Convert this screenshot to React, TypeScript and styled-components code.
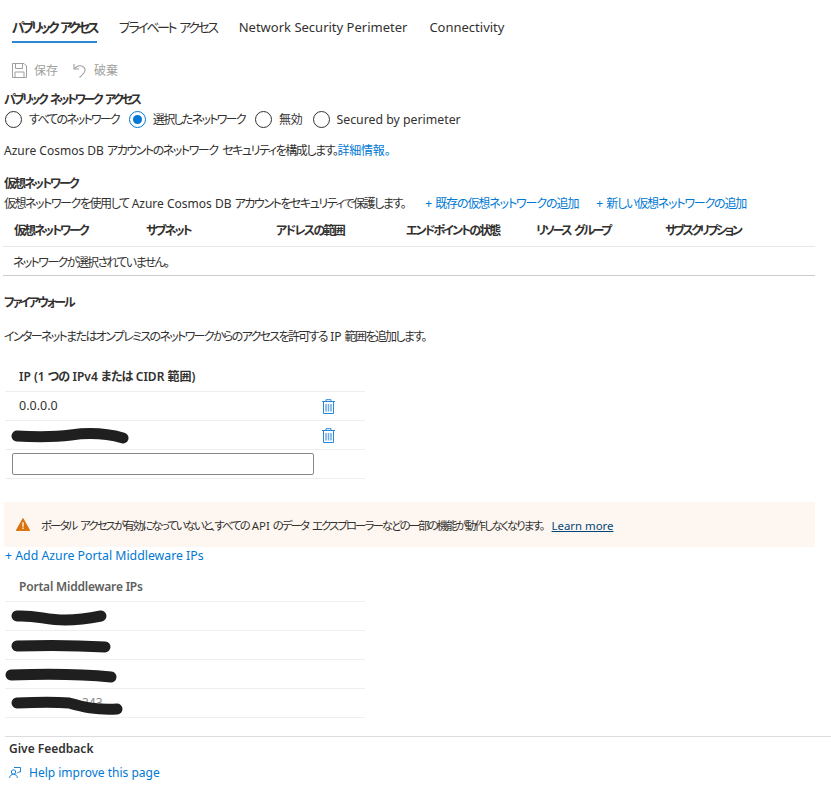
import React from 'react';
import styled, { createGlobalStyle } from 'styled-components';

const GlobalStyle = createGlobalStyle`
  html, body {
    margin: 0;
    padding: 0;
    background: #fff;
  }
  body {
    font-family: "Noto Sans", "Noto Sans CJK JP", sans-serif;
    font-size: 12px;
    font-feature-settings: "palt";
    color: #323130;
  }
`;

const Page = styled.div`
  width: 831px;
  height: 795px;
  overflow: hidden;
`;

// Japanese runs in the original font are much tighter than Noto CJK
const Ja = styled.span<{ $t: number }>`
  letter-spacing: ${({ $t }) => $t}px;
  word-spacing: 3px;
`;

const Tabs = styled.div`
  display: flex;
  gap: 22px;
  padding: 16px 0 0 12px;
`;

const Tab = styled.div<{ $active?: boolean }>`
  height: 25px;
  line-height: 22px;
  font-size: 13px;
  white-space: nowrap;
  font-weight: ${({ $active }) => ($active ? 600 : 400)};
  border-bottom: 2px solid ${({ $active }) => ($active ? '#2b88d8' : 'transparent')};
`;

const Toolbar = styled.div`
  display: flex;
  align-items: center;
  height: 24px;
  margin-top: 15px;
  padding-left: 12px;
  color: #a19f9d;
`;

const ToolButton = styled.div`
  display: flex;
  align-items: center;
  gap: 7px;
  margin-right: 15px;
`;

const Section = styled.div`
  padding: 10px 0 0 4px;
`;

const Label = styled.div`
  font-size: 12px;
  font-weight: 600;
  line-height: 16px;
`;

const RadioRow = styled.div`
  display: flex;
  align-items: center;
  gap: 10px;
  height: 20px;
  margin-top: 1px;
  padding-left: 1px;
`;

const RadioOption = styled.div`
  display: flex;
  align-items: center;
  gap: 7px;
  white-space: nowrap;
`;

const RadioCircle = styled.span<{ $checked?: boolean }>`
  box-sizing: border-box;
  display: flex;
  align-items: center;
  justify-content: center;
  width: 17px;
  height: 17px;
  border-radius: 50%;
  border: 1px solid ${({ $checked }) => ($checked ? '#0078d4' : '#323130')};
  &::after {
    content: '';
    display: ${({ $checked }) => ($checked ? 'block' : 'none')};
    width: 9px;
    height: 9px;
    border-radius: 50%;
    background: #0078d4;
  }
`;

const PerimeterLabel = styled.span`
  font-size: 12.300px;
`;

const Text = styled.div`
  line-height: 16px;
  white-space: nowrap;
`;

const Intro = styled(Text)`
  margin-top: 14px;
`;

const Link = styled.a`
  color: #0078d4;
  text-decoration: none;
`;

const VnetHead = styled(Label)`
  margin-top: 17px;
`;

const VnetDesc = styled.div`
  display: flex;
  height: 20px;
  margin-top: 1px;
  align-items: center;
  white-space: pre;
`;

const AddLink = styled(Link)<{ $left: number }>`
  margin-left: ${({ $left }) => $left}px;
`;

const VnetTable = styled.div`
  width: 812px;
  margin: -1px 0 0 -1px;
  border-bottom: 1px solid #ccc;
`;

const VnetHeader = styled.div`
  display: grid;
  grid-template-columns: 132px 130px 130px 130px 129px 1fr;
  align-items: center;
  height: 33px;
  padding: 1px 0 0 11px;
  box-sizing: content-box;
  border-bottom: 1px solid #e8e8e8;
  font-size: 12px;
  font-weight: 600;
`;

const VnetEmpty = styled.div`
  height: 28px;
  line-height: 31px;
  padding-left: 10px;
`;

const FirewallHead = styled(Label)`
  margin-top: 19px;
`;

const FirewallDesc = styled(Text)`
  margin-top: 18px;
`;

const IpTable = styled.div`
  width: 360px;
  margin: 17px 0 0 1px;
`;

const IpHeader = styled.div`
  height: 30px;
  line-height: 30px;
  padding-left: 14px;
  font-weight: 600;
  border-bottom: 1px solid #eee;
  box-sizing: border-box;
`;

const PortalHeader = styled(IpHeader)`
  color: #605e5c;
  letter-spacing: -0.2px;
`;

const IpRow = styled.div`
  position: relative;
  box-sizing: border-box;
  display: flex;
  align-items: center;
  justify-content: space-between;
  height: 29px;
  padding: 0 30px 0 14px;
  border-bottom: 1px solid #eee;
`;

const IpText = styled.span`
  font-size: 12.500px;
  margin-top: -2px;
`;

const TrashButton = styled.span`
  display: flex;
  margin-left: auto;
  color: #2b88d8;
`;

const IpInput = styled.input`
  box-sizing: border-box;
  width: 302px;
  height: 22px;
  margin-left: -7px;
  border: 1px solid #8a8886;
  border-radius: 2px;
  background: #fff;
`;

const Scribble = styled.svg<{ $left: number }>`
  position: absolute;
  top: 0;
  left: ${({ $left }) => $left}px;
`;

const Peek = styled.span`
  position: absolute;
  left: 77px;
  top: 5px;
  color: #8a8886;
`;

const Banner = styled.div`
  display: flex;
  align-items: center;
  gap: 11px;
  width: 811px;
  height: 45px;
  margin-top: 23px;
  padding-left: 12px;
  box-sizing: border-box;
  background: #fef7f1;
  font-size: 11.400px;
  white-space: pre;
`;

const BannerLink = styled.a`
  color: #004578;
  text-decoration: underline;
  margin-left: 8px;
`;

const MiddlewareLink = styled(Link)`
  display: block;
  margin-left: 1px;
  line-height: 18px;
  font-size: 12.300px;
`;

const PortalTable = styled(IpTable)`
  margin-top: 7px;
`;

const Feedback = styled.div`
  margin: 18px 0 0 5px;
  border-top: 1px solid #ddd;
  padding: 4px 0 0 4px;
`;

const FeedbackTitle = styled.div`
  line-height: 16px;
  font-weight: 600;
`;

const FeedbackLink = styled(Link)`
  display: flex;
  align-items: center;
  gap: 8px;
  margin-top: 7px;
  line-height: 18px;
`;

const SaveIcon = () => (
  <svg width="15" height="15" viewBox="0 0 15 15" fill="none" stroke="#a19f9d" strokeWidth="1">
    <path d="M.5.5h11.500l2.500 2.500v11.500H.5z" />
    <path d="M3.500.5v5h7v-5M3 14.500V9h9v5.500" />
  </svg>
);

const UndoIcon = () => (
  <svg width="14" height="15" viewBox="0 0 14 15" fill="none" stroke="#a19f9d" strokeWidth="1.100">
    <path d="M1 1v5h5" />
    <path d="M1.500 5.500 4 3.500c3-1.500 7-.5 8 2.500 .8 2.500-1.500 5-5.500 8.500" />
  </svg>
);

const TrashIcon = () => (
  <svg width="13" height="15" viewBox="0 0 13 15" fill="none" stroke="currentColor" strokeWidth="1">
    <path d="M0 2.500h13M4 2.500V.7h5v1.800" />
    <path d="M1.500 2.500v12h10v-12" />
    <path d="M4 5v7.500M6.500 5v7.500M9 5v7.500" strokeWidth="1.500" opacity=".7" />
  </svg>
);

const WarningIcon = () => (
  <svg width="14" height="13" viewBox="0 0 15 14">
    <path d="M7.500.5 14.800 13.500H.2z" fill="#d9730d" stroke="#d9730d" strokeLinejoin="round" />
    <path d="M6.800 4.500h1.400v5H6.800zM6.800 10.300h1.400v1.500H6.800z" fill="#fff" />
  </svg>
);

const FeedbackIcon = () => (
  <svg width="12" height="13" viewBox="0 0 12 13" fill="none" stroke="#0078d4" strokeWidth=".9">
    <circle cx="4.500" cy="5" r="2.200" />
    <path d="M.5 11c.5-2.500 2-3.800 4-3.800s3.500 1.300 4 3.800" />
    <path d="M5 .5h6.500v4.500H9.500L8 6.500" />
  </svg>
);

const Redaction = ({ left, width, d }: { left: number; width: number; d: string }) => (
  <Scribble $left={left} width={width} height="29" viewBox={`0 0 ${width} 29`} fill="none">
    <path d={d} stroke="#1f1f1f" strokeWidth="11" strokeLinecap="round" strokeLinejoin="round" />
  </Scribble>
);

const vnetColumns: [string, number][] = [
  ['仮想ネットワーク', -2],
  ['サブネット', -2],
  ['アドレスの範囲', -1.7],
  ['エンドポイントの状態', -1.9],
  ['リソース グループ', -2.300],
  ['サブスクリプション', -2.500],
];

export default function App() {
  return (
    <Page>
      <GlobalStyle />
      <Tabs>
        <Tab $active>
          <Ja $t={-2.800}>パブリック アクセス</Ja>
        </Tab>
        <Tab>
          <Ja $t={-2.400}>プライベート アクセス</Ja>
        </Tab>
        <Tab>Network Security Perimeter</Tab>
        <Tab>Connectivity</Tab>
      </Tabs>
      <Toolbar>
        <ToolButton>
          <SaveIcon />
          保存
        </ToolButton>
        <ToolButton>
          <UndoIcon />
          破棄
        </ToolButton>
      </Toolbar>
      <Section>
        <Label>
          <Ja $t={-2.400}>パブリック ネットワーク アクセス</Ja>
        </Label>
        <RadioRow>
          <RadioOption>
            <RadioCircle />
            <Ja $t={-1.800}>すべてのネットワーク</Ja>
          </RadioOption>
          <RadioOption>
            <RadioCircle $checked />
            <Ja $t={-1.700}>選択したネットワーク</Ja>
          </RadioOption>
          <RadioOption>
            <RadioCircle />
            <Ja $t={-0.200}>無効</Ja>
          </RadioOption>
          <RadioOption>
            <RadioCircle />
            <PerimeterLabel>Secured by perimeter</PerimeterLabel>
          </RadioOption>
        </RadioRow>
        <Intro>
          Azure Cosmos DB <Ja $t={-1.450}>アカウントのネットワーク セキュリティを構成します。</Ja>
          <Link>
            <Ja $t={-0.200}>詳細情報。</Ja>
          </Link>
        </Intro>
        <VnetHead>
          <Ja $t={-2}>仮想ネットワーク</Ja>
        </VnetHead>
        <VnetDesc>
          <Ja $t={-1.450}>仮想ネットワークを使用して</Ja> Azure Cosmos DB{' '}
          <Ja $t={-1.450}>アカウントをセキュリティで保護します。</Ja>
          <AddLink $left={20}>
            + <Ja $t={-1.100}>既存の仮想ネットワークの追加</Ja>
          </AddLink>
          <AddLink $left={18}>
            + <Ja $t={-1.200}>新しい仮想ネットワークの追加</Ja>
          </AddLink>
        </VnetDesc>
        <VnetTable>
          <VnetHeader>
            {vnetColumns.map(([name, track]) => (
              <span key={name}>
                <Ja $t={track}>{name}</Ja>
              </span>
            ))}
          </VnetHeader>
          <VnetEmpty>
            <Ja $t={-1.650}>ネットワークが選択されていません。</Ja>
          </VnetEmpty>
        </VnetTable>
        <FirewallHead>
          <Ja $t={-2.200}>ファイアウォール</Ja>
        </FirewallHead>
        <FirewallDesc>
          <Ja $t={-1.650}>インターネットまたはオンプレミスのネットワークからのアクセスを許可する</Ja> IP{' '}
          <Ja $t={-1.650}>範囲を追加します。</Ja>
        </FirewallDesc>
        <IpTable>
          <IpHeader>
            IP (1 <Ja $t={-0.800}>つの</Ja> IPv4 <Ja $t={-0.800}>または</Ja> CIDR 範囲)
          </IpHeader>
          <IpRow>
            <IpText>0.0.0.0</IpText>
            <TrashButton>
              <TrashIcon />
            </TrashButton>
          </IpRow>
          <IpRow>
            <Redaction left={6} width={118} d="M6 15c20 1 38 1 54-1 14-2 34-2 52 3" />
            <TrashButton>
              <TrashIcon />
            </TrashButton>
          </IpRow>
          <IpRow>
            <IpInput />
          </IpRow>
        </IpTable>
        <Banner>
          <WarningIcon />
          <span>
            <Ja $t={-1.900}>ポータル アクセスが有効になっていないと、すべての</Ja> API{' '}
            <Ja $t={-1.900}>のデータ エクスプローラーなどの一部の機能が動作しなくなります。</Ja>
            <BannerLink>Learn more</BannerLink>
          </span>
        </Banner>
        <MiddlewareLink>+ Add Azure Portal Middleware IPs</MiddlewareLink>
        <PortalTable>
          <PortalHeader>Portal Middleware IPs</PortalHeader>
          <IpRow>
            <Redaction left={6} width={98} d="M6 14c20-1 28 4 48 4 14 0 26-2 36-4" />
          </IpRow>
          <IpRow>
            <Redaction left={6} width={100} d="M6 15c30-1 56-1 88 1" />
          </IpRow>
          <IpRow>
            <Redaction left={0} width={112} d="M6 15c30-1 70-1 100 2" />
          </IpRow>
          <IpRow>
            <Peek>343</Peek>
            <Redaction left={6} width={112} d="M6 14c22-1 40-1 52 0 14 4 26 7 48 6" />
          </IpRow>
        </PortalTable>
      </Section>
      <Feedback>
        <FeedbackTitle>Give Feedback</FeedbackTitle>
        <FeedbackLink>
          <FeedbackIcon />
          Help improve this page
        </FeedbackLink>
      </Feedback>
    </Page>
  );
}
